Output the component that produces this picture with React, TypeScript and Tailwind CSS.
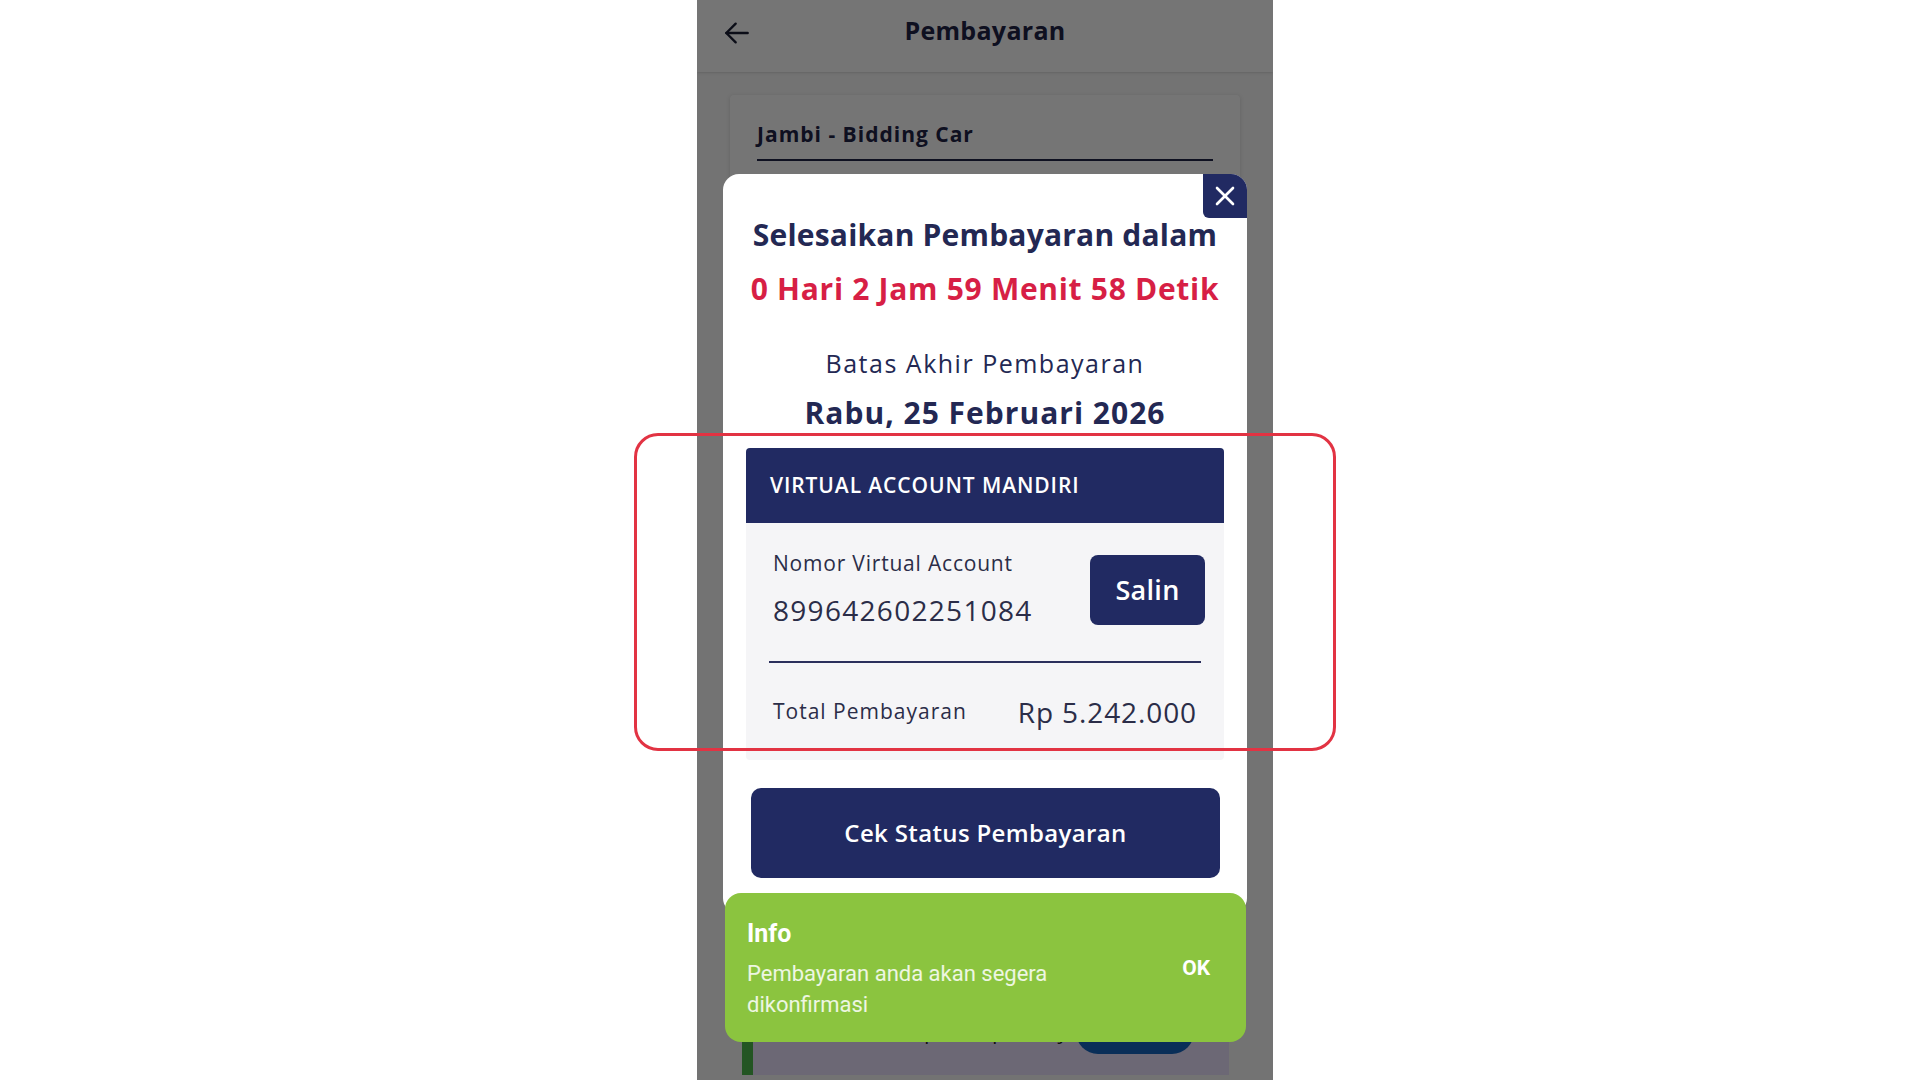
import React from "react";

const NAVY = "bg-[#212a62]";

function ArrowLeft() {
  return (
    <svg width="32" height="32" viewBox="0 0 24 24" fill="none" stroke="#1a1d33" strokeWidth="1.8" strokeLinecap="round" strokeLinejoin="round">
      <path d="M20 12H4" />
      <path d="M11 5l-7 7 7 7" />
    </svg>
  );
}

function XIcon() {
  return (
    <svg width="22" height="22" viewBox="0 0 22 22" fill="none" stroke="#ffffff" strokeWidth="2.6" strokeLinecap="round">
      <path d="M3 3l16 16" />
      <path d="M19 3L3 19" />
    </svg>
  );
}

export default function App() {
  return (
    <div className="w-[1920px] h-[1080px] bg-white relative overflow-hidden" style={{ fontFamily: "'Open Sans', 'Noto Sans', sans-serif" }}>
      <div className="ml-[697px] w-[576px] h-[1080px] relative overflow-hidden bg-[#fafafa]">
        {/* Underlying page */}
        <div className="h-[72px] bg-white flex items-center relative shadow-sm">
          <div className="absolute left-[24px] top-[17px]"><ArrowLeft /></div>
          <div className="w-full text-center text-[25px] font-bold text-[#1f2347] tracking-[0.3px] -mt-[10px]">Pembayaran</div>
        </div>
        <div className="mx-[33px] mt-[23px] bg-white rounded-[4px] shadow-[0_1px_4px_rgba(0,0,0,0.15)] px-[27px] pt-[25px] h-[180px]">
          <div className="text-[21px] font-bold text-[#1f2347] leading-[28px] pb-[11px] border-b-2 border-[#1f2347] tracking-[1px]">Jambi - Bidding Car</div>
        </div>
        <div className="absolute left-[45px] top-[990px] w-[487px] h-[85px] bg-[#ece3ff] flex">
          <div className="w-[11px] h-full bg-[#4cba4c]" />
          <div className="flex-1 flex items-start pt-[27px] pl-[100px] text-[20px] text-[#222]">Silakan proses pembayaran</div>
          <div className="absolute left-[334px] top-[20px] w-[118px] h-[44px] rounded-full bg-[#1565c0]" />
        </div>

        {/* Dim overlay */}
        <div className="absolute inset-0 bg-black/[0.54]" />

        {/* Modal */}
        <div className="absolute left-[26px] top-[174px] w-[524px] h-[740px] bg-white rounded-[16px]">
          <button className={`absolute right-0 top-0 w-[44px] h-[44px] ${NAVY} rounded-tr-[16px] rounded-bl-[6px] flex items-center justify-center`}>
            <XIcon />
          </button>
          <div className="pt-[42px] text-center text-[30px] font-bold text-[#232853] leading-[38px] tracking-[0.2px]">Selesaikan Pembayaran dalam</div>
          <div className="mt-[16px] text-center text-[30px] font-bold text-[#d71f45] leading-[38px] tracking-[0.7px]">0 Hari 2 Jam 59 Menit 58 Detik</div>
          <div className="mt-[39px] text-center text-[25px] text-[#232853] leading-[32px] tracking-[1.5px]">Batas Akhir Pembayaran</div>
          <div className="mt-[15px] text-center text-[30px] font-bold text-[#232853] leading-[38px] tracking-[1px]">Rabu, 25 Februari 2026</div>

          <div className="mx-[23px] mt-[16px] rounded-[4px] overflow-hidden bg-[#f5f5f7]">
            <div className={`${NAVY} h-[75px] flex items-center pl-[24px] text-white text-[21px] font-semibold tracking-[0.9px]`}>VIRTUAL ACCOUNT MANDIRI</div>
            <div className="flex items-center justify-between pl-[27px] pr-[19px] pt-[27px]">
              <div>
                <div className="text-[21px] text-[#2b2d48] leading-[26px] tracking-[0.8px]">Nomor Virtual Account</div>
                <div className="mt-[18px] text-[28px] text-[#2b2d48] leading-[32px] tracking-[1.3px]">899642602251084</div>
              </div>
              <button className={`${NAVY} w-[115px] h-[70px] mt-[4px] rounded-[8px] text-white text-[27px] font-semibold tracking-[0.3px]`}>Salin</button>
            </div>
            <div className="mx-[23px] mt-[35px] border-b-2 border-[#2b2f5c]" />
            <div className="flex items-center justify-between pl-[27px] pr-[27px] h-[97px]">
              <span className="text-[21px] text-[#2b2d48] tracking-[1px]">Total Pembayaran</span>
              <span className="text-[28px] text-[#2b2d48] tracking-[0.9px]">Rp 5.242.000</span>
            </div>
          </div>

          <button className={`ml-[28px] mt-[28px] w-[469px] h-[90px] ${NAVY} rounded-[10px] text-white text-[24px] font-semibold tracking-[0.35px]`}>Cek Status Pembayaran</button>
        </div>

        {/* Toast */}
        <div className="absolute left-[28px] top-[893px] w-[521px] h-[149px] bg-[#8bc43f] rounded-[16px] flex items-center justify-between pl-[22px] pr-[36px] pt-[4px]" style={{ fontFamily: "Roboto, sans-serif" }}>
          <div className="w-[340px]">
            <div className="text-[25px] font-bold text-white leading-[30px]">Info</div>
            <div className="mt-[9px] text-[22px] text-white/85 leading-[31px]">Pembayaran anda akan segera dikonfirmasi</div>
          </div>
          <div className="text-[21px] font-bold text-white mt-[-2px]">OK</div>
        </div>
      </div>

      {/* Red annotation outline */}
      <div className="absolute left-[634px] top-[433px] w-[702px] h-[318px] border-[3px] border-[#e23343] rounded-[24px]" />
    </div>
  );
}
